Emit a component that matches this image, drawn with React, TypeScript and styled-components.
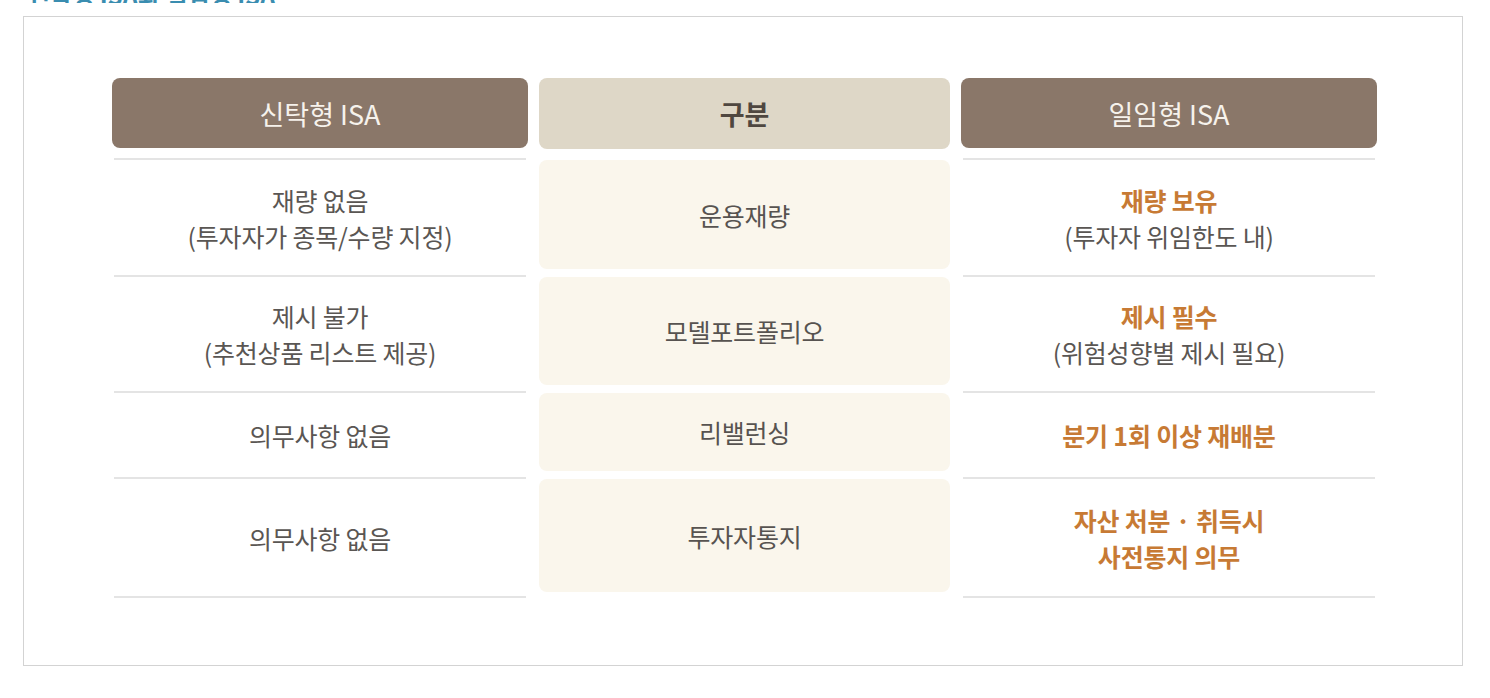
import styled, { createGlobalStyle } from "styled-components";

const GlobalStyle = createGlobalStyle`
    body {
        margin: 0;
        background: #fff;
        font-family: "Noto Sans CJK KR", "Noto Sans", sans-serif;
    }
`

const Page = styled.div`
    width: 1440px;
    padding-left: 23px;
`

const TitleClip = styled.div`
    height: 3px;
    overflow: hidden;
    display: flex;
    align-items: flex-end;
`

const Title = styled.h2`
    margin: 0 0 -4px 5px;
    font-size: 24px;
    line-height: 24px;
    font-weight: 700;
    color: #3a8db0;
    white-space: nowrap;
`

const Frame = styled.div`
    box-sizing: border-box;
    width: 1440px;
    height: 650px;
    margin-top: 13px;
    border: 1px solid #d3d3d3;
    padding: 61px 0 0 88px;
`

const Table = styled.div`
    display: grid;
    grid-template-columns: 416px 411px 416px;
    grid-template-rows: 80px 117px 116px 86px 121px;
    column-gap: 11px;
`

const HeadCell = styled.div<{ $mid?: boolean }>`
    height: ${p => (p.$mid ? 71 : 70)}px;
    border-radius: 8px;
    display: flex;
    align-items: center;
    justify-content: center;
    background: ${p => (p.$mid ? "#ded7c7" : "#8a7769")};
    color: ${p => (p.$mid ? "#4f4740" : "#f6f2ec")};
    font-size: 27px;
    font-weight: ${p => (p.$mid ? 700 : 400)};
    letter-spacing: 0;
`

const SideCell = styled.div<{ $last?: boolean }>`
    margin: 0 2px;
    border-top: 2px solid #e4e4e4;
    border-bottom: ${p => (p.$last ? "2px solid #e4e4e4" : "none")};
    display: flex;
    flex-direction: column;
    align-items: center;
    justify-content: center;
    text-align: center;
    font-size: 25px;
    line-height: 36px;
    letter-spacing: -0.2px;
    color: #5a5653;
`

const Strong = styled.span`
    color: #c77a34;
    font-weight: 700;
`

const MidCell = styled.div`
    margin: 2px 0 6px;
    border-radius: 8px;
    background: #faf6ec;
    display: flex;
    align-items: center;
    justify-content: center;
    font-size: 25px;
    letter-spacing: -0.2px;
    color: #575350;
`

type Row = { label: string; left: string[]; right: string[] }

const rows: Row[] = [
    { label: "운용재량", left: ["재량 없음", "(투자자가 종목/수량 지정)"], right: ["재량 보유", "(투자자 위임한도 내)"] },
    { label: "모델포트폴리오", left: ["제시 불가", "(추천상품 리스트 제공)"], right: ["제시 필수", "(위험성향별 제시 필요)"] },
    { label: "리밸런싱", left: ["의무사항 없음"], right: ["분기 1회 이상 재배분"] },
    { label: "투자자통지", left: ["의무사항 없음"], right: ["자산 처분 · 취득시", "사전통지 의무"] },
]

// first line of each right cell is highlighted, the last row entirely
const boldLine = (i: number, j: number) => i === 3 || j === 0

export default function App() {
    return (
        <Page>
            <GlobalStyle />
            <TitleClip>
                <Title>신탁형 ISA와 일임형 ISA</Title>
            </TitleClip>
            <Frame>
                <Table>
                    <HeadCell>신탁형 ISA</HeadCell>
                    <HeadCell $mid>구분</HeadCell>
                    <HeadCell>일임형 ISA</HeadCell>
                    {rows.map((row, i) => {
                        const last = i === rows.length - 1
                        return [
                            <SideCell key={`l${i}`} $last={last}>
                                {row.left.map(t => <div key={t}>{t}</div>)}
                            </SideCell>,
                            <MidCell key={`m${i}`}>{row.label}</MidCell>,
                            <SideCell key={`r${i}`} $last={last}>
                                {row.right.map((t, j) =>
                                    boldLine(i, j) ? <Strong key={t}>{t}</Strong> : <div key={t}>{t}</div>
                                )}
                            </SideCell>,
                        ]
                    })}
                </Table>
            </Frame>
        </Page>
    )
}
